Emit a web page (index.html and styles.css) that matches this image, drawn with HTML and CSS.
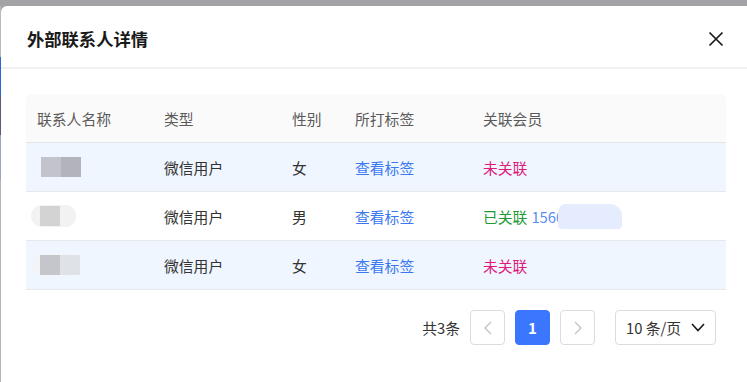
FILE: index.html
```html
<!DOCTYPE html>
<html lang="zh-CN">
<head>
<meta charset="utf-8">
<title>外部联系人详情</title>
<link rel="stylesheet" href="styles.css">
</head>
<body>
<div class="page">
  <div class="edge"></div>
  <div class="modal">
    <div class="modal-header">
      <h2 class="modal-title">外部联系人详情</h2>
      <button class="close" aria-label="关闭">
        <svg width="16" height="16" viewBox="0 0 16 16"><path d="M1.5 1.5 L14.5 14.5 M14.5 1.5 L1.5 14.5" stroke="#1a1a1a" stroke-width="1.7" fill="none"/></svg>
      </button>
    </div>
    <div class="modal-body">
      <div class="table">
        <div class="row head">
          <div class="cell">联系人名称</div>
          <div class="cell">类型</div>
          <div class="cell">性别</div>
          <div class="cell">所打标签</div>
          <div class="cell">关联会员</div>
        </div>
        <div class="row striped">
          <div class="cell"><span class="blur blur-a"><i></i><i></i></span></div>
          <div class="cell">微信用户</div>
          <div class="cell">女</div>
          <div class="cell"><a class="link">查看标签</a></div>
          <div class="cell"><span class="unlinked">未关联</span></div>
        </div>
        <div class="row">
          <div class="cell"><span class="blur blur-b"><i></i><i></i></span></div>
          <div class="cell">微信用户</div>
          <div class="cell">男</div>
          <div class="cell"><a class="link">查看标签</a></div>
          <div class="cell"><span class="linked">已关联</span> <span class="phone">1560</span><span class="blur-phone"></span></div>
        </div>
        <div class="row striped">
          <div class="cell"><span class="blur blur-c"><i></i><i></i></span></div>
          <div class="cell">微信用户</div>
          <div class="cell">女</div>
          <div class="cell"><a class="link">查看标签</a></div>
          <div class="cell"><span class="unlinked">未关联</span></div>
        </div>
      </div>
      <div class="pager">
        <span class="total">共3条</span>
        <button class="pbtn disabled">
          <svg width="10" height="14" viewBox="0 0 10 14"><path d="M8 1 L2 7 L8 13" stroke="#c4c4c4" stroke-width="1.4" fill="none"/></svg>
        </button>
        <button class="pbtn active">1</button>
        <button class="pbtn disabled">
          <svg width="10" height="14" viewBox="0 0 10 14"><path d="M2 1 L8 7 L2 13" stroke="#c4c4c4" stroke-width="1.4" fill="none"/></svg>
        </button>
        <div class="size-select">
          <span>10 条/页</span>
          <svg width="14" height="9" viewBox="0 0 14 9"><path d="M1 1 L7 7.5 L13 1" stroke="#1a1a1a" stroke-width="1.6" fill="none"/></svg>
        </div>
      </div>
    </div>
  </div>
</div>
</body>
</html>
```

FILE: styles.css
```css
* { box-sizing: border-box; }
html, body {
  margin: 0;
  padding: 0;
  width: 747px;
  height: 382px;
  overflow: hidden;
  background: #a3a3a7;
  font-family: "Noto Sans CJK SC", "Noto Sans", sans-serif;
}
.page {
  display: flex;
  height: 382px;
  padding-top: 6px;
}
.edge {
  width: 1px;
  flex: none;
  background: linear-gradient(to bottom,
    #b9b9bd 0, #b9b9bd 51px,
    #2f63d8 51px, #2f63d8 87px,
    #5c5c70 93px, #5c5c70 129px,
    #9aa6c4 129px, #9aa6c4 174px,
    #b5b5b8 174px, #b5b5b8 100%);
}
.modal {
  flex: none;
  width: 750px;
  background: #fff;
  border-top-left-radius: 6px;
}
.modal-header {
  height: 63px;
  display: flex;
  align-items: center;
  justify-content: space-between;
  padding: 4px 26px 0 26px;
  border-bottom: 2px solid #f1f1f1;
}
.modal-title {
  margin: 0;
  font-size: 17.3px;
  font-weight: 700;
  color: #1a1a1a;
}
.close {
  border: 0;
  background: none;
  padding: 0;
  width: 16px;
  height: 16px;
  display: flex;
  margin-right: 1px;
}
.modal-body {
  padding: 25px 25px 0 25px;
}
.table {
  width: 700px;
  font-size: 14.8px;
  color: #333;
}
.row {
  display: grid;
  grid-template-columns: 127px 128px 63px 128px 1fr;
  height: 49px;
  border-bottom: 1px solid #e6e8eb;
  align-items: center;
}
.row.head {
  background: #fafafa;
  color: #5a5a5a;
  border-top-left-radius: 6px;
  border-top-right-radius: 6px;
  border-bottom: 1px solid #e3e5e8;
}
.row.striped { background: #eff6ff; }
.cell {
  padding-left: 11px;
  white-space: nowrap;
  display: flex;
  align-items: center;
}
.link { color: #3a78f0; }
.unlinked { color: #e0197b; }
.linked { color: #1d9a33; }
.phone { color: #5b8ef5; margin-left: 4px; }
.blur-phone {
  display: inline-block;
  width: 64px;
  height: 25px;
  margin-left: -6px;
  border-radius: 8px 12px 4px 4px;
  background: #e4ecfd;
}
.blur {
  display: inline-flex;
  height: 22px;
  border-radius: 11px;
  padding: 0 2px;
}
.blur i { display: block; height: 20px; margin-top: 1px; }
.blur-a { margin-left: 2px; }
.blur-a i:first-child { width: 20px; background: #c3c4cb; }
.blur-a i:last-child { width: 20px; background: #b2b3bb; }
.blur-b { margin-left: -6px; background: #f2f2f2; padding: 0 16px 0 9px; }
.blur-b i:first-child { width: 20px; background: #d3d3d3; }
.blur-b i:last-child { width: 0; }
.blur-c { margin-left: -4px; background: #f3f4f6; padding: 0 0 0 7px; }
.blur-c i:first-child { width: 20px; background: #c4c6cc; }
.blur-c i:last-child { width: 20px; background: #dfe2e7; }
.pager {
  width: 700px;
  display: flex;
  justify-content: flex-end;
  align-items: center;
  margin-top: 20px;
  padding-right: 10px;
  font-size: 14.8px;
  color: #333;
}
.total { margin-right: 10px; }
.pbtn {
  width: 35px;
  height: 35px;
  border: 1px solid #dcdcdc;
  border-radius: 4px;
  background: #fff;
  display: flex;
  align-items: center;
  justify-content: center;
  padding: 0;
  margin-right: 10px;
  font-family: inherit;
  font-size: 15px;
}
.pbtn.active {
  background: #3a76fe;
  border-color: #3a76fe;
  color: #fff;
  font-weight: 700;
}
.pbtn:nth-of-type(3) { margin-right: 20px; }
.size-select {
  width: 101px;
  height: 35px;
  border: 1px solid #dcdcdc;
  border-radius: 4px;
  display: flex;
  align-items: center;
  justify-content: space-between;
  padding: 0 10px 0 10px;
  color: #333;
}
```
